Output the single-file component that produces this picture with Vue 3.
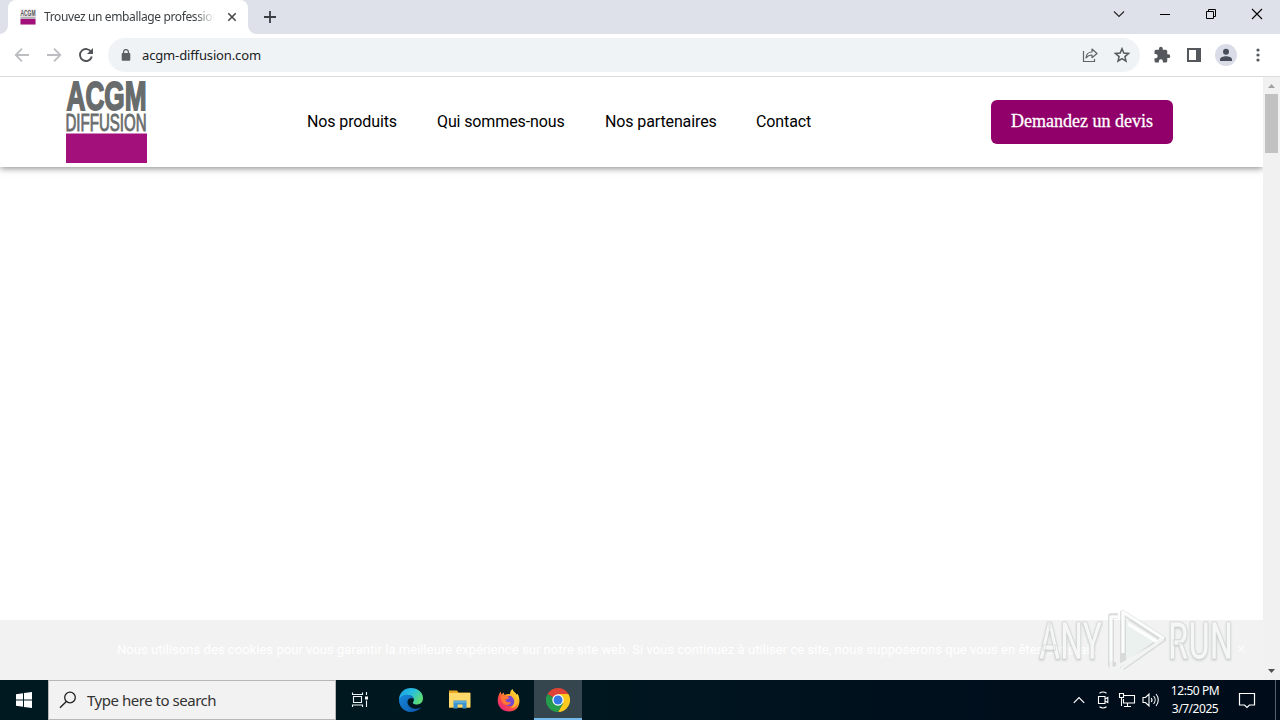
<script setup>
const navLinks = [
  { label: 'Nos produits', cls: 'produits' },
  { label: 'Qui sommes-nous', cls: 'sommes' },
  { label: 'Nos partenaires', cls: 'partenaires' },
  { label: 'Contact', cls: 'contact' }
]
</script>

<template>
  <div class="desktop">
    <div class="tabbar">
      <div class="tab">
        <svg class="favicon" width="16" height="16" viewBox="0 0 16 16">
          <rect width="16" height="16" fill="#f3eef2" />
          <text x="0.5" y="7" textLength="15" lengthAdjust="spacingAndGlyphs" class="logo-text" font-size="9" font-weight="700" fill="#555">ACGM</text>
          <rect x="0.5" y="7.700" width="15" height="2.200" fill="#b5b0b4" />
          <rect x="0.5" y="10" width="15" height="5.5" fill="#a3107c" />
        </svg>
        <span class="tab-title">Trouvez un emballage professionnel</span>
        <svg class="tab-close" width="10" height="10" viewBox="0 0 10 10"><path d="M1.3 1.3l7.4 7.4M8.7 1.3L1.3 8.7" stroke="#45484c" stroke-width="1.6" /></svg>
      </div>
      <svg class="newtab" width="14" height="14" viewBox="0 0 14 14"><path d="M7 1v12M1 7h12" stroke="#3a3d42" stroke-width="1.8" /></svg>
      <div class="winctl">
        <svg width="46" height="28" viewBox="0 0 46 28"><path d="M18 11.5l5 5 5-5" fill="none" stroke="#222" stroke-width="1.1" /></svg>
        <svg width="46" height="28" viewBox="0 0 46 28"><path d="M18 14.5h10" stroke="#000" /></svg>
        <svg width="46" height="28" viewBox="0 0 46 28"><path d="M18.500 11.500h7v7h-7zM20.500 11.500v-2h7v7h-2" fill="none" stroke="#000" /></svg>
        <svg width="46" height="28" viewBox="0 0 46 28"><path d="M18 9l10 10M28 9L18 19" stroke="#000" stroke-width="1.1" /></svg>
      </div>
    </div>

    <div class="toolbar">
      <svg class="nav-i" width="16" height="16" viewBox="0 0 16 16"><path d="M15 8H2M8 1.700L1.700 8 8 14.300" fill="none" stroke="#bbbdc0" stroke-width="1.8" /></svg>
      <svg class="nav-i" width="16" height="16" viewBox="0 0 16 16"><path d="M1 8h13M8 1.700L14.300 8 8 14.300" fill="none" stroke="#bbbdc0" stroke-width="1.8" /></svg>
      <svg class="nav-i reload" width="16" height="16" viewBox="0 0 16 16"><path d="M13.300 5.200A6 6 0 1 0 13.800 9.500" fill="none" stroke="#505357" stroke-width="1.9" /><path d="M15 1v6H9z" fill="#505357" /></svg>
      <div class="omnibox">
        <svg width="10" height="12" viewBox="0 0 10 12"><rect x="0.700" y="4" width="8.600" height="7.700" rx="1" fill="#5c6065" /><path d="M2.600 5V3a2.400 2.400 0 0 1 4.800 0v2" fill="none" stroke="#5c6065" stroke-width="1.3" /></svg>
        <span class="url">acgm-diffusion.com</span>
        <svg class="share" width="16" height="16" viewBox="0 0 16 16"><path d="M1.500 4v10.500h11V12" fill="none" stroke="#606469" stroke-width="1.200" /><path d="M4 11c.3-4 2.500-6 6-6V2l5 4.500-5 4.200V8C7.500 8 5.500 9 4 11z" fill="none" stroke="#606469" stroke-width="1.200" stroke-linejoin="round" /></svg>
        <svg class="star" width="16" height="16" viewBox="0 0 16 16"><path d="M8 1.700l1.800 4.400 4.700.4-3.600 3.100 1.100 4.600L8 11.700l-4 2.500 1.100-4.600L1.500 6.500l4.700-.4z" fill="none" stroke="#55595e" stroke-width="1.500" /></svg>
      </div>
      <svg class="puzzle" width="18" height="18" viewBox="0 0 24 24"><path fill="#54585c" d="M20.500 11H19V7a2 2 0 0 0-2-2h-4V3.500a2.500 2.500 0 0 0-5 0V5H4a2 2 0 0 0-2 2v3.800h1.500a2.700 2.700 0 0 1 0 5.400H2V20a2 2 0 0 0 2 2h3.800v-1.500a2.700 2.700 0 0 1 5.400 0V22H17a2 2 0 0 0 2-2v-4h1.500a2.500 2.500 0 0 0 0-5z" /></svg>
      <svg class="panel" width="14" height="14" viewBox="0 0 14 14"><rect x="1" y="1" width="12" height="12" fill="#fff" stroke="#54585c" stroke-width="2" /><path d="M9 0h5v14H9z" fill="#54585c" /></svg>
      <svg class="avatar" width="22" height="22" viewBox="0 0 22 22"><circle cx="11" cy="11" r="11" fill="#dadce7" /><circle cx="11" cy="7.700" r="3" fill="#484d5c" /><path d="M5 17v-1.500c0-2.200 3.500-3.300 6-3.300s6 1.100 6 3.300V17z" fill="#484d5c" /></svg>
      <svg class="dots" width="4" height="14" viewBox="0 0 4 14"><g fill="#54585c"><circle cx="2" cy="2" r="1.600" /><circle cx="2" cy="7" r="1.600" /><circle cx="2" cy="12" r="1.600" /></g></svg>
    </div>

    <div class="viewport">
      <div class="page">
        <header class="site-header">
          <svg class="logo" width="84" height="86" viewBox="0 0 84 86">
            <text x="1.500" y="31" textLength="80" lengthAdjust="spacingAndGlyphs" class="logo-text" font-size="41" font-weight="700" fill="#686c6c" stroke="#686c6c" stroke-width="1.800">ACGM</text>
            <text x="0.500" y="52.300" textLength="81" lengthAdjust="spacingAndGlyphs" class="logo-text" font-size="24" fill="#686c6c" stroke="#686c6c" stroke-width="0.900">DIFFUSION</text>
            <rect x="1" y="54.500" width="81" height="29.500" fill="#a3107c" />
          </svg>
          <nav class="site-nav">
            <a v-for="link in navLinks" :key="link.label" :class="link.cls">{{ link.label }}</a>
          </nav>
          <button class="quote">Demandez un devis</button>
        </header>
        <main class="blank"></main>
        <div class="cookie">
          <span>Nous utilisons des cookies pour vous garantir la meilleure expérience sur notre site web. Si vous continuez à utiliser ce site, nous supposerons que vous en êtes satisfait.</span>
          <svg class="cookie-close" width="8" height="8" viewBox="0 0 8 8"><path d="M1 1l6 6M7 1L1 7" stroke="#fafafa" stroke-width="1.200" /></svg>
        </div>
      </div>
      <div class="scrollbar">
        <svg width="17" height="17" viewBox="0 0 17 17"><path d="M5 11l3.500-4L12 11z" fill="#a3a3a3" /></svg>
        <div class="thumb"></div>
        <svg class="down" width="17" height="17" viewBox="0 0 17 17"><path d="M5 6l3.500 4L12 6z" fill="#505050" /></svg>
      </div>
      <svg class="watermark" width="204" height="70" viewBox="0 0 204 70">
        <g fill="none" stroke="#b9bdbd" stroke-opacity="0.450" stroke-width="6" stroke-linejoin="round">
          <path d="M83 9h-7v49h5M88 6l40 26-40 28z" />
        </g>
        <path d="M91 15l30 18-30 20z" fill="#e8f0ee" fill-opacity="0.800" />
        <g fill="none" stroke="#fff" stroke-opacity="0.900" stroke-width="3.200" stroke-linejoin="round">
          <path d="M76 54V10h7M88 46V5l40 26-6 4-29-18" />
        </g>
        <g fill="none" stroke="#f1f4f3" stroke-width="3" stroke-linejoin="round">
          <path d="M76 54v7h4l42-24M128 32L87 61v5" />
        </g>
        <g class="wm-text" font-size="51">
          <text x="4" y="51.500" textLength="63" lengthAdjust="spacingAndGlyphs">ANY</text>
          <text x="133" y="51.500" textLength="65" lengthAdjust="spacingAndGlyphs">RUN</text>
        </g>
      </svg>
    </div>

    <div class="taskbar">
      <div class="start">
        <svg width="16" height="16" viewBox="0 0 16 16"><path fill="#fff" d="M0 2.200L7 1.200V7.500H0zM8 1.050L16 0v7.500H8zM0 8.500h7v6.300L0 13.800zM8 8.500h8V16l-8-1.100z" /></svg>
      </div>
      <div class="search">
        <svg width="18" height="18" viewBox="0 0 18 18"><circle cx="11" cy="6.500" r="5.300" fill="none" stroke="#222" stroke-width="1.300" /><path d="M7.300 10.400L1 16.700" stroke="#222" stroke-width="1.400" /></svg>
        <span>Type here to search</span>
      </div>
      <div class="task">
        <svg width="18" height="18" viewBox="0 0 18 18"><path d="M1.500 1.500v2h10v-2M1.500 16v-2h10v2M2.500 5.500h8v6h-8zM15.500 1v3M15.500 9.500V16" fill="none" stroke="#eef2f4" stroke-width="1.100" /><path d="M14 5.500h3v3h-3z" fill="#fff" /></svg>
      </div>
      <div class="task edge">
        <svg width="26" height="26" viewBox="0 0 26 26">
          <defs>
            <linearGradient id="edgeTop" x1="0" y1="0" x2="1" y2="0.500"><stop offset="0" stop-color="#199ce4" /><stop offset="0.550" stop-color="#28bfdf" /><stop offset="1" stop-color="#5bdc76" /></linearGradient>
            <linearGradient id="edgeLow" x1="0" y1="0" x2="1" y2="1"><stop offset="0" stop-color="#1789dc" /><stop offset="1" stop-color="#0b55a8" /></linearGradient>
          </defs>
          <path d="M1 13C1 5.500 6.500 1 13 1c7 0 12 4.500 12 10 0 4.500-3 6.500-6.500 6.500-3 0-4-1.300-3.500-2.300 2.500-3.500-.5-7-5-7-4 0-7.500 2-9 4.800z" fill="url(#edgeTop)" />
          <path d="M1 13c1-3.500 5-5.500 8.500-5.200 3.500.2 5.500 2 6 4-4.500-1.500-6.500 1-6 4 .7 3.700 4.500 6.500 9 6 2-.2 3.700-.9 4.700-1.500C21 23 17.500 25 13 25 6 25 1 19.500 1 13z" fill="url(#edgeLow)" />
          <path d="M11 12c-4 2-4 9 1 13C6 24 5 14 11 12z" fill="#1376c5" />
        </svg>
      </div>
      <div class="task explorer">
        <svg width="24" height="22" viewBox="0 0 24 22"><path d="M1 1.500h8l1.500 2H22v15H1z" fill="#e9a925" /><path d="M1 4h21.500v14.500H1z" fill="#ffd969" /><path d="M5.500 19.500v-8h13v8h-4v-4H9.700v4z" fill="#3b91ce" /><path d="M5.500 13h13" stroke="#73bde8" stroke-width="1.200" /></svg>
      </div>
      <div class="task firefox">
        <svg width="24" height="24" viewBox="0 0 24 24">
          <defs><linearGradient id="foxBody" x1="0.900" y1="0.100" x2="0.200" y2="0.900"><stop offset="0" stop-color="#fff044" /><stop offset="0.350" stop-color="#ffab25" /><stop offset="0.650" stop-color="#ff513d" /><stop offset="1" stop-color="#e72878" /></linearGradient></defs>
          <path d="M3.500 3.500l1 3 2-2 1 2.500c2-1 3.500-1 5.500-.8C13 4 14 2 15.500 1c.5 2.500 3 3.500 4.500 6l.5-1.500C25 14 21.500 23.500 12 23.500 5.500 23.500.7 19 .7 12.500.7 9 2 6 3.500 3.500z" fill="url(#foxBody)" />
          <circle cx="12.500" cy="13" r="5.300" fill="#7647cf" />
          <path d="M4 8c3-1.500 6-.5 8 1.500-.3 1.500-2 1.700-3.500 2 0 2.500 2.500 3.500 5.500 2.300-1 4-6 4.200-8.300 1C4.500 13 4 10.500 4 8z" fill="#ff7735" />
          <path d="M15 3c2 4 6 6 5 12-1 3-3.500 5-6.500 5 4-2.500 5-6.500 2.500-10-1.500-2-3-3.500-1-7z" fill="#ffbd2d" />
        </svg>
      </div>
      <div class="task active">
        <svg width="24" height="24" viewBox="0 0 24 24">
          <path d="M12 12L1.600 6A12 12 0 0 1 22.400 6z" fill="#df4236" />
          <path d="M12 12V6h10.400A12 12 0 0 1 12 24l5.200-9z" fill="#fbc91e" />
          <path d="M12 12l5.200 3L12 24A12 12 0 0 1 1.600 6L6.800 15z" fill="#269c4d" />
          <path d="M1.600 6L12 6v6z" fill="#df4236" /><path d="M1.600 6L6.800 15 9 11z" fill="#269c4d" />
          <circle cx="12" cy="12" r="5.700" fill="#fff" /><circle cx="12" cy="12" r="4.500" fill="#3478e5" />
        </svg>
      </div>
      <div class="tray">
        <svg class="chev" width="12" height="8" viewBox="0 0 12 8"><path d="M.8 6.800L6 1.500l5.200 5.300" fill="none" stroke="#fff" stroke-width="1.200" /></svg>
        <svg class="cam" width="12" height="18" viewBox="0 0 12 18"><path d="M2.500 2.200C4.500.8 7.500.8 9.500 2.200M2.500 15.800c2 1.400 5 1.400 7 0M1.500 5.500h6.500v7H1.500zM8 8l2.800-1.500v5L8 10" fill="none" stroke="#fff" stroke-width="1.100" /></svg>
        <svg class="net" width="18" height="16" viewBox="0 0 18 16"><path d="M6 3.500h10.500v7.500h-11V7M1.500 1.500h4v4h-4zM3.500 5.500V14M9.500 11v3M6 14.500h7" fill="none" stroke="#fff" stroke-width="1.100" /></svg>
        <svg class="vol" width="18" height="16" viewBox="0 0 18 16"><path d="M1 5.500h2.500L7 2v12l-3.500-3.500H1zM9.200 6c1 1.200 1 2.800 0 4M11.600 4c2 2.300 2 5.700 0 8M14 2c3 3.400 3 8.600 0 12" fill="none" stroke="#fff" stroke-width="1.100" /></svg>
        <div class="clock"><span>12:50 PM</span><span>3/7/2025</span></div>
        <svg class="note" width="18" height="17" viewBox="0 0 18 17"><path d="M1.500 1.500h15v11.500h-5L9 15.500 6.500 13h-5z" fill="none" stroke="#fff" stroke-width="1.200" /></svg>
        <i class="peek"></i>
      </div>
    </div>
  </div>
</template>

<style>
html, body { margin: 0; overflow: hidden; }
</style>

<style scoped>
* { box-sizing: border-box; }
svg { display: block; flex: none; }
.desktop { width: 1280px; height: 720px; display: flex; flex-direction: column; overflow: hidden; background: #fff; font-family: "Noto Sans", "Open Sans", sans-serif; }
.tabbar { height: 34px; flex: none; display: flex; background: #dee1e9; padding-left: 8px; }
.tab { width: 240px; height: 34px; flex: none; background: #fff; border-radius: 8px 8px 0 0; display: flex; align-items: center; position: relative; }
.tab::before, .tab::after { content: ""; position: absolute; bottom: 0; width: 8px; height: 8px; }
.tab::before { left: -8px; background: radial-gradient(circle at 0 0, transparent 7.500px, #fff 8px); }
.tab::after { right: -8px; background: radial-gradient(circle at 100% 0, transparent 7.500px, #fff 8px); }
.favicon { margin-left: 12px; overflow: visible; }
.tab-title { width: 171px; margin-left: 8px; overflow: hidden; white-space: nowrap; font-size: 12px; letter-spacing: -0.370px; line-height: 18px; color: #3c4043; -webkit-mask-image: linear-gradient(90deg, #000 88%, transparent 100%); mask-image: linear-gradient(90deg, #000 88%, transparent 100%); }
.tab-close { margin-left: 12px; }
.newtab { margin: 10px 0 0 15px; }
.winctl { display: flex; margin-left: auto; }
.toolbar { height: 43px; flex: none; display: flex; align-items: center; border-bottom: 1px solid #dadce0; padding-left: 14px; background: #fff; }
.nav-i { margin-right: 16px; }
.reload { margin-right: 14px; }
.omnibox { width: 1032px; height: 34px; flex: none; border-radius: 17px; background: #f0f3f5; display: flex; align-items: center; padding: 0 10px 0 13px; }
.url { margin-left: 11px; font-size: 13px; letter-spacing: -0.140px; line-height: 20px; color: #202124; white-space: nowrap; }
.share { margin-left: auto; }
.star { margin-left: 16px; }
.puzzle { margin-left: 13px; }
.panel { margin-left: 16px; }
.avatar { margin-left: 14px; }
.dots { margin-left: 19px; }
.viewport { height: 603px; flex: none; display: flex; position: relative; }
.page { width: 1263px; flex: none; display: flex; flex-direction: column; }
.site-header { height: 90px; flex: none; display: flex; align-items: center; background: #fff; box-shadow: 0 1px 7px rgba(0, 0, 0, 0.5); clip-path: inset(0 0 -14px 0); position: relative; }
.logo { margin: 0 0 0 65px; overflow: visible; }
.logo-text { font-family: "Liberation Sans", Arial, sans-serif; }
.site-nav { display: flex; gap: 40px; margin-left: 158px; font-family: Roboto, sans-serif; font-size: 16px; letter-spacing: -0.120px; line-height: 24px; color: #000; }
.site-nav a { white-space: nowrap; }
.produits { width: 90px; }
.sommes { width: 128px; }
.partenaires { width: 111px; }
.contact { width: 55px; }
.quote { width: 182px; height: 44px; margin-left: auto; margin-right: 90px; border: 0; padding: 0 0 2px; border-radius: 6px; background: #91006a; color: #fff; font-family: "Liberation Serif", "Times New Roman", serif; font-size: 18px; white-space: nowrap; -webkit-text-stroke: 0.300px #fff; }
.blank { flex: 1; background: #fff; }
.cookie { height: 60px; flex: none; background: #f2f2f2; color: #fff; display: flex; align-items: center; padding: 0 18px 2px 117px; font-family: Roboto, sans-serif; font-size: 13px; letter-spacing: 0.040px; white-space: nowrap; }
.cookie-close { margin-left: auto; }
.scrollbar { width: 17px; flex: none; background: #f1f1f1; display: flex; flex-direction: column; align-items: center; }
.thumb { width: 13px; height: 59px; background: #c1c1c1; }
.down { margin-top: auto; }
.watermark { position: absolute; left: 1035px; top: 530px; }
.wm-text { font-family: Roboto, "Liberation Sans", sans-serif; font-weight: 500; fill: #fafafa; fill-opacity: 0.920; stroke: #cccece; stroke-opacity: 0.600; stroke-width: 1.200px; filter: drop-shadow(0 1px 1px rgba(80, 90, 90, 0.28)); }
.taskbar { height: 40px; flex: none; display: flex; background: linear-gradient(90deg, #001820 0%, #001720 45%, #000e1c 80%, #000c1a 100%); }
.start { width: 48px; display: flex; align-items: center; justify-content: center; }
.search { width: 288px; height: 40px; border: 1px solid #b5b7b8; background: #f2f2f2; display: flex; align-items: center; padding-left: 10px; }
.search span { margin-left: 10px; font-size: 15px; line-height: 22px; letter-spacing: -0.470px; color: #333; white-space: nowrap; }
.task { width: 48px; display: flex; align-items: center; justify-content: center; }
.edge { width: 54px; }
.explorer { padding-right: 4px; }
.firefox { padding-right: 2px; }
.task.active { background: #35464e; border-bottom: 2px solid #76b9ed; padding-top: 2px; }
.tray { flex: 1; display: flex; align-items: center; justify-content: flex-end; color: #fff; }
.chev { margin-right: 12px; }
.cam { margin-right: 9px; }
.net { margin-right: 6px; }
.vol { margin-right: 10px; }
.clock { width: 50px; height: 36px; display: flex; flex-direction: column; align-items: center; font-size: 12px; line-height: 18px; letter-spacing: -0.450px; white-space: nowrap; }
.note { margin-left: 18px; }
.peek { width: 1px; height: 40px; margin-left: 19px; margin-right: 4px; background: #56616a; }
</style>
